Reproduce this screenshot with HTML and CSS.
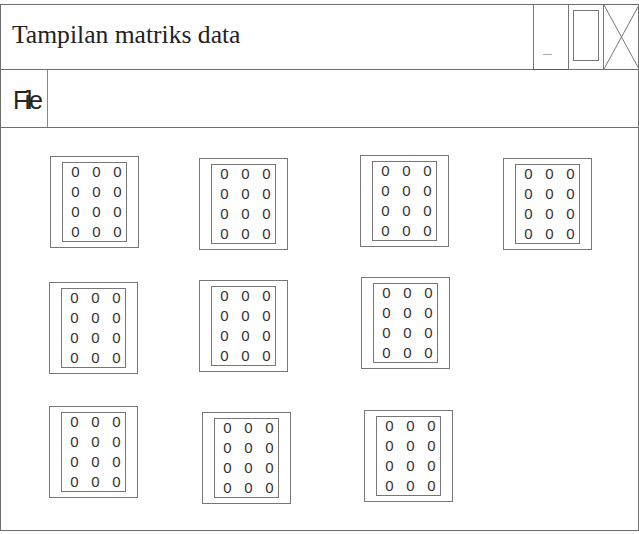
FILE: index.html
```html
<!DOCTYPE html>
<html>
<head>
<meta charset="utf-8">
<title>Tampilan matriks data</title>
<link rel="stylesheet" href="styles.css">
</head>
<body>

<div class="window">

    <!-- title bar with the three window buttons -->
    <div class="titleBar">
        <div class="title">Tampilan matriks data</div>
        <div class="winButton minButton"><span class="minDash"></span></div>
        <div class="winButton maxButton"><span class="maxBox"></span></div>
        <div class="winButton closeButton">
            <svg width="35" height="64" viewBox="0 0 35 64">
                <line x1="0" y1="0" x2="35" y2="64" stroke="#777" stroke-width="1"/>
                <line x1="35" y1="0" x2="0" y2="64" stroke="#777" stroke-width="1"/>
            </svg>
        </div>
    </div>

    <div class="menuBar">
        <div class="menuItem">File</div>
    </div>

    <!-- 3 rows of matrices, filled in by the script below -->
    <div class="matrixArea" id="matrixArea"></div>

</div>

<script>
// nudge classes per matrix, left to right, top to bottom (null = empty cell)
var MATRICES = [
    'n1', 'n2', 'n3', 'n2',
    'n4', '',   'n5', null,
    '',   'n6', 'n7', null
];
var ROWS = 4;
var COLS = 3;

var area = document.getElementById('matrixArea');
for (var m = 0; m < MATRICES.length; m++) {
    var cell = document.createElement('div');
    cell.className = 'cell';
    if (MATRICES[m] !== null) {
        var html = '<div class="matrix ' + MATRICES[m] + '"><div class="grid">';
        for (var i = 0; i < ROWS * COLS; i++) {
            html += '<span>0</span>';
        }
        html += '</div></div>';
        cell.innerHTML = html;
    }
    area.appendChild(cell);
}
</script>

</body>
</html>
```

FILE: styles.css
```css
/* Plain wireframe window: grey lines on white */
body
{
    margin:             0;
    background-color:   white;
    font-family:        "Liberation Sans", Arial, sans-serif;
}

.window
{
    margin-top:     4px;
    width:          637px;
    height:         525px;
    border:         1px solid #6e6e6e;
    display:        flex;
    flex-direction: column;
}

.titleBar
{
    display:        flex;
    height:         64px;
    border-bottom:  1px solid #6e6e6e;
}

.title
{
    flex:           1;
    padding:        15px 0 0 11px;
    font-family:    "Liberation Serif", "Times New Roman", serif;
    font-size:      25.6px;
    color:          #222;
}

.winButton
{
    width:          34px;
    border-left:    1px solid #777;
    position:       relative;
}

.minButton
{
    border-bottom:  1px solid #555;
    margin-bottom:  -1px;
}

.minDash
{
    position:       absolute;
    left:           9px;
    top:            49px;
    width:          9px;
    border-top:     1px solid #aaa;
}

.maxBox
{
    position:       absolute;
    left:           4px;
    top:            5px;
    width:          24px;
    height:         49px;
    border:         1px solid #777;
}

.closeButton svg
{
    display:        block;
}

.menuBar
{
    display:        flex;
    height:         57px;
    border-bottom:  1px solid #6e6e6e;
}

.menuItem
{
    border-right:   1px solid #888;
    padding:        16px 0 0 12px;
    box-sizing:     border-box;
    width:          47px;
    font-size:      25px;
    letter-spacing: -3.5px;
    color:          #222;
}

.matrixArea
{
    display:        grid;
    grid-template-columns: 150px 162px 142px 89px;
    grid-template-rows:    124px 126px 100px;
    padding:        28px 0 0 48px;
}

.matrix
{
    border:         1px solid #777;
    padding:        5px 11px;
    box-sizing:     border-box;
    width:          89px;
    height:         92px;
}

.grid
{
    height:         100%;
    border:         1px solid #777;
    box-sizing:     border-box;
    display:        grid;
    grid-template-columns: repeat(3, 21px);
    grid-template-rows:    repeat(4, 20px);
    padding:        0 0 0 2px;
    align-content:  center;
    font-size:      15px;
    color:          #333;
    line-height:    20px;
}

.grid span
{
    text-align:     center;
}

/* small hand-placed offsets */
.n1 { margin: 0 0 0 1px; }
.n2 { margin: 2px 0 0 0; }
.n3 { margin: -1px 0 0 -1px; }
.n4 { margin: 2px 0 0 0; }
.n5 { margin: -3px 0 0 0; }
.n6 { margin: 6px 0 0 3px; }
.n7 { margin: 4px 0 0 3px; }
```
